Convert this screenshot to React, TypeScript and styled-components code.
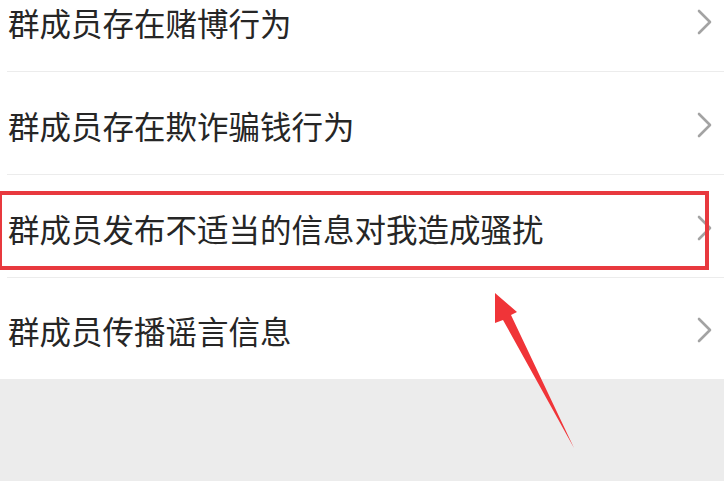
import styled, { createGlobalStyle } from "styled-components";

const GlobalStyle = createGlobalStyle`
html, body {
    margin: 0;
    padding: 0;
    background: #ececec;
    font-family: "Noto Sans CJK SC", "Noto Sans", sans-serif;
}
`

const StyledPage = styled.div`
position: relative;
width: 724px;
height: 481px;
overflow: hidden;
background: #ececec;
`

const StyledList = styled.ul`
list-style-type: none;
margin: -31px 0 0 0;
padding: 0;
background: white;
`

const StyledRow = styled.li<{last?: boolean}>`
position: relative;
display: flex;
align-items: center;
justify-content: space-between;
height: 103px;
box-sizing: border-box;
margin-left: 7px;
padding: 3px 11px 0 1px;
border-bottom: 1px solid ${p => (p.last ? "transparent" : "#ececec")};
&:last-child {
    height: 101px;
}
`

const StyledLabel = styled.span`
font-size: 31.5px;
line-height: 40px;
color: #262626;
white-space: nowrap;
`

const StyledHighlight = styled.div`
position: absolute;
left: -9px;
top: 16px;
width: 711px;
height: 79px;
box-sizing: border-box;
border: 4px solid #e8393e;
pointer-events: none;
`

const StyledArrow = styled.svg`
position: absolute;
left: 0;
top: 0;
pointer-events: none;
`

function Chevron() {
    return (
        <svg width="16" height="26" viewBox="0 0 16 26">
            <polyline points="2,2 13,13 2,24" fill="none" stroke="#a3a3a3" strokeWidth="2.6" strokeLinecap="round" strokeLinejoin="round" />
        </svg>
    )
}

const items = [
    "群成员存在赌博行为",
    "群成员存在欺诈骗钱行为",
    "群成员发布不适当的信息对我造成骚扰",
    "群成员传播谣言信息",
]

export default function App() {
    return (
        <StyledPage>
            <GlobalStyle />
            <StyledList>
                {items.map((text, i) => (
                    <StyledRow key={text} last={i === items.length - 1}>
                        <StyledLabel>{text}</StyledLabel>
                        <Chevron />
                        {i === 2 && <StyledHighlight />}
                    </StyledRow>
                ))}
            </StyledList>
            <StyledArrow width="724" height="481" viewBox="0 0 724 481">
                <polygon
                    points="495,293 517,312 511,315 574,448 503,320 495,323"
                    fill="#f03438"
                />
            </StyledArrow>
        </StyledPage>
    )
}
